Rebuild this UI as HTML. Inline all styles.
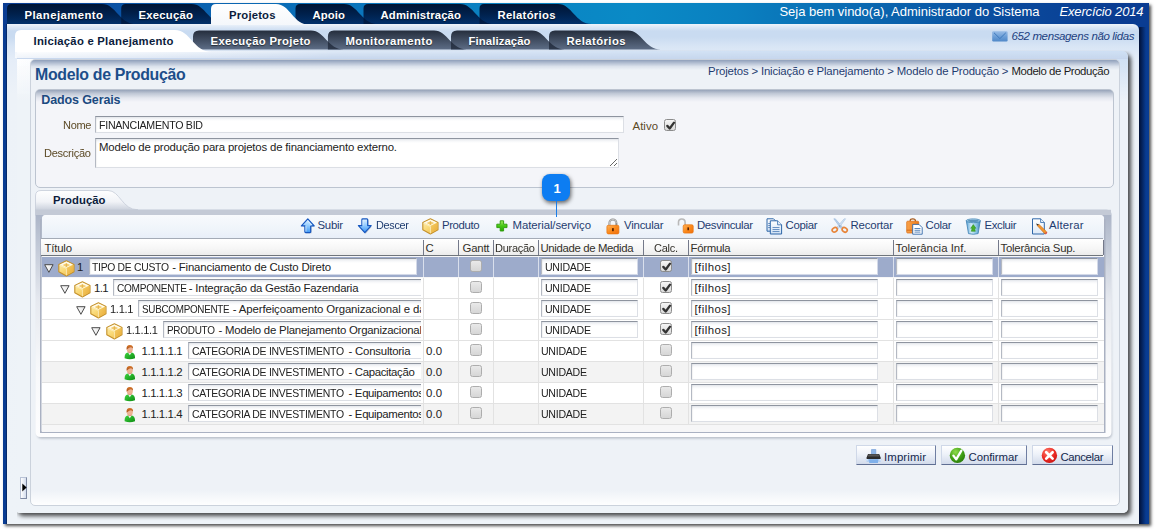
<!DOCTYPE html><html><head><meta charset="utf-8"><title>Modelo de Produção</title><style>

html,body{margin:0;padding:0;background:#fff;}
body{width:1157px;height:532px;position:relative;overflow:hidden;font-family:"Liberation Sans",sans-serif;font-size:11px;}
.a{position:absolute;box-sizing:content-box;}
.t{position:absolute;white-space:nowrap;font-family:"Liberation Sans",sans-serif;}
.in{background:linear-gradient(#e4e7ec 0px,#f6f7f9 2px,#fff 4px);border:1px solid;border-color:#8e949f #dcdfe5 #dcdfe5 #b4b9c3;box-shadow:inset 1px 0 1px rgba(0,0,0,.05);}
.ck{width:9.500px;height:9.500px;border:1px solid #8c8c8c;border-radius:2.500px;background:linear-gradient(#f6f6f6,#d9d9d9);}
.ck.dis{border-color:#adadad;background:linear-gradient(#e9e9e9,#d6d6d6);}
.btn{border:1px solid #8a97b3;border-top-color:#cfd8e8;border-left-color:#cfd8e8;border-bottom-color:#5f6e92;border-right-color:#6f7ea2;background:linear-gradient(#ffffff,#eef2f9 45%,#d2dbeb);}

</style></head><body>
<div class="a" style="left:3px;top:3px;width:1146px;height:521px;background:#093c92;box-shadow:2px 2px 3px rgba(0,0,0,.7);"></div>
<div class="a" style="left:3px;top:3px;width:1146px;height:21px;background:linear-gradient(90deg,#0a3c92 0%,#0a489c 6%,#0a5cab 14%,#0a72ba 28%,#0a84c3 45%,#0a8ac6 55%,#0a80c0 64%,#0a66af 76%,#0a4a9c 88%,#0a3c92 97%);"></div>
<svg class="a" style="left:0;top:0" width="1157" height="30" viewBox="0 0 1157 30"><defs><linearGradient id="tg" x1="0" y1="0" x2="0" y2="1"><stop offset="0" stop-color="#001433"/><stop offset="0.55" stop-color="#00224f"/><stop offset="1" stop-color="#01306a"/></linearGradient><linearGradient id="tg2" x1="0" y1="0" x2="0" y2="1"><stop offset="0" stop-color="#00102b"/><stop offset="1" stop-color="#001c46"/></linearGradient><linearGradient id="ta" x1="0" y1="0" x2="0" y2="1"><stop offset="0" stop-color="#ffffff"/><stop offset="1" stop-color="#f4f7fb"/></linearGradient><clipPath id="tc0"><path d="M7,24 L7,8.5 Q7,4 11.5,4 L102,4 C116.28,4 119.0,24 136,24 Z"/></clipPath><clipPath id="tc1"><path d="M121.2,24 L121.2,8.5 Q121.2,4 125.7,4 L191.5,4 C205.78,4 208.5,24 225.5,24 Z"/></clipPath><clipPath id="tc2"><path d="M211,24 L211,8.5 Q211,4 215.5,4 L276,4 C290.28,4 293.0,24 310,24 Z"/></clipPath><clipPath id="tc3"><path d="M295.5,24 L295.5,8.5 Q295.5,4 300.0,4 L344,4 C358.28,4 361.0,24 378,24 Z"/></clipPath><clipPath id="tc4"><path d="M363.5,24 L363.5,8.5 Q363.5,4 368.0,4 L460,4 C474.28,4 477.0,24 494,24 Z"/></clipPath><clipPath id="tc5"><path d="M479.5,24 L479.5,8.5 Q479.5,4 484.0,4 L558,4 C572.28,4 575.0,24 592,24 Z"/></clipPath></defs><path d="M479.5,24 L479.5,8.5 Q479.5,4 484.0,4 L558,4 C572.28,4 575.0,24 592,24 Z" fill="url(#tg)"/><path d="M363.5,24 L363.5,8.5 Q363.5,4 368.0,4 L460,4 C474.28,4 477.0,24 494,24 Z" fill="url(#tg)"/><path d="M295.5,24 L295.5,8.5 Q295.5,4 300.0,4 L344,4 C358.28,4 361.0,24 378,24 Z" fill="url(#tg)"/><path d="M121.2,24 L121.2,8.5 Q121.2,4 125.7,4 L191.5,4 C205.78,4 208.5,24 225.5,24 Z" fill="url(#tg)"/><path d="M7,24 L7,8.5 Q7,4 11.5,4 L102,4 C116.28,4 119.0,24 136,24 Z" fill="url(#tg)"/><path d="M7,24 L7,8.5 Q7,4 11.5,4 L102,4 C116.28,4 119.0,24 136,24 Z" fill="url(#tg2)" clip-path="url(#tc1)"/><path d="M295.5,24 L295.5,8.5 Q295.5,4 300.0,4 L344,4 C358.28,4 361.0,24 378,24 Z" fill="url(#tg2)" clip-path="url(#tc4)"/><path d="M363.5,24 L363.5,8.5 Q363.5,4 368.0,4 L460,4 C474.28,4 477.0,24 494,24 Z" fill="url(#tg2)" clip-path="url(#tc5)"/></svg>
<div class="a" style="left:7px;top:24px;width:1132px;height:500px;border-radius:0 6px 0 0;background:linear-gradient(#eef4fb 0px,#dde8f6 3px,#c9dbf1 7px,#c9dbf1 13px,#d8e5f5 22px,#e5edf8 36px,#edf2f8 70px,#eef3f8 100%);"></div>
<div class="a" style="left:1139px;top:27px;width:7px;height:497px;background:linear-gradient(90deg,rgba(0,8,36,.85),rgba(0,10,40,0));"></div>
<div class="a" style="left:6px;top:24px;width:1px;height:500px;background:#062a6a;"></div>
<svg class="a" style="left:0;top:0" width="1157" height="30" viewBox="0 0 1157 30"><path d="M211,25 L211,9 Q211,4 216,4 L276,4 C290.28,4 293.0,25 310,25 Z" fill="url(#ta)"/></svg>
<div class="a" style="left:15px;top:50.5px;width:1113px;height:462.5px;border-radius:0 6px 5px 5px;background:linear-gradient(rgba(200,216,238,0) 0px,rgba(200,216,238,.35) 2.500px,rgba(198,214,237,.95) 7.500px,rgba(198,214,237,0) 7.600px),linear-gradient(rgba(238,243,248,0) 0px,rgba(238,243,248,0) 8px,#eef3f8 50px),linear-gradient(90deg,#ffffff 0px,#f6f9fd 40px,#dde8f6 330px,#cfe0f4 800px);box-shadow:3px 3px 4px rgba(0,0,0,.7);clip-path:inset(0 -12px -12px 2px);"></div>
<div class="a" style="left:15px;top:50.5px;width:320px;height:7.6px;background:linear-gradient(90deg,rgba(255,255,255,.7),rgba(255,255,255,0));"></div>
<svg class="a" style="left:0;top:24px" width="1157" height="30" viewBox="0 24 1157 30"><defs><linearGradient id="sg" x1="0" y1="0" x2="0" y2="1"><stop offset="0" stop-color="#252e3d"/><stop offset="1" stop-color="#5d6d86"/></linearGradient><linearGradient id="sg2" x1="0" y1="0" x2="0" y2="1"><stop offset="0" stop-color="#1c2432"/><stop offset="1" stop-color="#2d384b"/></linearGradient><clipPath id="sc0"><path d="M193,49.5 L193,36.5 Q193,30.5 199,30.5 L311,30.5 C324.86,30.5 327.5,49.5 344,49.5 Z"/></clipPath><clipPath id="sc1"><path d="M327.9,49.5 L327.9,36.5 Q327.9,30.5 333.9,30.5 L434,30.5 C447.86,30.5 450.5,49.5 467,49.5 Z"/></clipPath><clipPath id="sc2"><path d="M451,49.5 L451,36.5 Q451,30.5 457,30.5 L532,30.5 C545.86,30.5 548.5,49.5 565,49.5 Z"/></clipPath><clipPath id="sc3"><path d="M549,49.5 L549,36.5 Q549,30.5 555,30.5 L628,30.5 C641.86,30.5 644.5,49.5 661,49.5 Z"/></clipPath></defs><path d="M549,49.5 L549,36.5 Q549,30.5 555,30.5 L628,30.5 C641.86,30.5 644.5,49.5 661,49.5 Z" fill="url(#sg)"/><path d="M451,49.5 L451,36.5 Q451,30.5 457,30.5 L532,30.5 C545.86,30.5 548.5,49.5 565,49.5 Z" fill="url(#sg)"/><path d="M327.9,49.5 L327.9,36.5 Q327.9,30.5 333.9,30.5 L434,30.5 C447.86,30.5 450.5,49.5 467,49.5 Z" fill="url(#sg)"/><path d="M193,49.5 L193,36.5 Q193,30.5 199,30.5 L311,30.5 C324.86,30.5 327.5,49.5 344,49.5 Z" fill="url(#sg)"/><path d="M193,49.5 L193,36.5 Q193,30.5 199,30.5 L311,30.5 C324.86,30.5 327.5,49.5 344,49.5 Z" fill="url(#sg2)" clip-path="url(#sc1)"/><path d="M327.9,49.5 L327.9,36.5 Q327.9,30.5 333.9,30.5 L434,30.5 C447.86,30.5 450.5,49.5 467,49.5 Z" fill="url(#sg2)" clip-path="url(#sc2)"/><path d="M451,49.5 L451,36.5 Q451,30.5 457,30.5 L532,30.5 C545.86,30.5 548.5,49.5 565,49.5 Z" fill="url(#sg2)" clip-path="url(#sc3)"/><path d="M15,52 L15,36 Q15,30 21,30 L175,30 C190.54,30 193.5,52 212,52 Z" fill="#fff"/></svg>
<svg class="a" style="left:992px;top:31px" width="16" height="11" viewBox="0 0 16 11"><defs><linearGradient id="g1" x1="0" y1="0" x2="0" y2="1"><stop offset="0" stop-color="#98bce6"/><stop offset="0.55" stop-color="#6a9dd6"/><stop offset="1" stop-color="#5088c8"/></linearGradient></defs><rect x="0.200" y="0.200" width="15.400" height="10.300" rx="1.200" fill="url(#g1)"/><path d="M2,1.800 L7.900,7.600 L13.800,1.800" fill="none" stroke="#3f79bd" stroke-width="1"/></svg>
<div class="a" style="left:30px;top:58.5px;width:1087.5px;height:445.5px;border:1px solid #cbd2dc;border-radius:5px;background:linear-gradient(#8f9fba 0px,#b3bfd2 3px,#dbe2ec 6.500px,#eef2f7 10px,#eef2f7 430px,#ffffff 446px);"></div>
<div class="a" style="left:35px;top:88.5px;width:1076.5px;height:97px;border:1px solid #bcc4d0;border-radius:5px;background:linear-gradient(#97a3b9 0px,#c0c8d6 3.500px,#e4e7ef 8px,#f4f5f9 12px,#f4f5f9 100%);"></div>
<div class="a in" style="left:95px;top:116px;width:527px;height:15px;"></div>
<div class="a in" style="left:95px;top:138px;width:522px;height:28px;"></div>
<svg class="a" style="left:608px;top:157px" width="10" height="10" viewBox="0 0 10 10"><path d="M9,2 L2,9 M9,6 L6,9" stroke="#666" stroke-width="1"/></svg>
<div class="a ck" style="left:664.2px;top:119.1px"></div><svg class="a" style="left:664.7px;top:119.6px" width="11" height="11" viewBox="0 0 11 11"><path d="M2.300,5.900 L4.700,8.500 L9,2.600" fill="none" stroke="#333" stroke-width="2.300" stroke-linecap="round" stroke-linejoin="round"/></svg>
<svg class="a" style="left:30px;top:186px" width="1090" height="256" viewBox="30 186 1090 256"><defs><linearGradient id="pt" x1="0" y1="190" x2="0" y2="216" gradientUnits="userSpaceOnUse"><stop offset="0" stop-color="#ffffff"/><stop offset=".45" stop-color="#f1f3f7"/><stop offset="1" stop-color="#aeb7c8"/></linearGradient><linearGradient id="pl" x1="0" y1="210" x2="0" y2="437" gradientUnits="userSpaceOnUse"><stop offset="0" stop-color="#a9b2c5"/><stop offset=".12" stop-color="#bcc4d3"/><stop offset=".4" stop-color="#e6e9ef"/><stop offset=".7" stop-color="#f7f8fa"/><stop offset="1" stop-color="#fdfdfe"/></linearGradient><filter id="psh" x="-2%" y="-5%" width="104%" height="112%"><feGaussianBlur stdDeviation="1.200"/></filter></defs><linearGradient id="psg" x1="0" y1="230" x2="0" y2="438" gradientUnits="userSpaceOnUse"><stop offset="0" stop-color="#5a6478" stop-opacity="0"/><stop offset=".7" stop-color="#5a6478" stop-opacity=".7"/><stop offset="1" stop-color="#5a6478" stop-opacity="1"/></linearGradient><path d="M37,230 H1112 V433 Q1112,438.500 1107,438.500 H42 Q37,438.500 37,433 Z" fill="url(#psg)" opacity=".38" filter="url(#psh)"/><path d="M35.500,209.800 H1106.500 Q1111.500,209.800 1111.500,215 V432 Q1111.500,437 1106.500,437 H40.500 Q35.500,437 35.500,432 Z" fill="url(#pl)"/><path d="M35.500,216 V196 Q35.500,190.500 41,190.500 H108 C120,190.500 122,209.800 138,209.800 H35.500 Z" fill="url(#pt)" stroke="#c5ccd8" stroke-width=".8"/><rect x="36" y="209.800" width="1075" height="5.200" fill="#c4cad6"/><path d="M40.750,219 V432.250 H1104.750 V219" fill="none" stroke="#aab1c2" stroke-width="1.500"/></svg>
<div class="a" style="left:41.5px;top:215px;width:1062.5px;height:216.5px;border-radius:4px 4px 0 0;background:#f6f6f7;"></div>
<div class="a" style="left:41.5px;top:215px;width:1062.5px;height:23.5px;border-radius:4px 4px 0 0;background:linear-gradient(#f8fafd,#eff4fa 60%,#e7eef8);"></div>
<div class="a" style="left:41px;top:238px;width:1062px;height:16px;background:linear-gradient(#ffffff,#f6f6f6 60%,#ececec);border-top:1px solid #a4abb6;border-bottom:1px solid #6f757c;"></div>
<div class="a" style="left:423.0px;top:240px;width:1px;height:15px;background:#74798a;"></div>
<div class="a" style="left:458.0px;top:240px;width:1px;height:15px;background:#74798a;"></div>
<div class="a" style="left:493.0px;top:240px;width:1px;height:15px;background:#74798a;"></div>
<div class="a" style="left:538.0px;top:240px;width:1px;height:15px;background:#74798a;"></div>
<div class="a" style="left:643.0px;top:240px;width:1px;height:15px;background:#74798a;"></div>
<div class="a" style="left:688.0px;top:240px;width:1px;height:15px;background:#74798a;"></div>
<div class="a" style="left:893.0px;top:240px;width:1px;height:15px;background:#74798a;"></div>
<div class="a" style="left:998.0px;top:240px;width:1px;height:15px;background:#74798a;"></div>
<div class="a" style="left:1103.0px;top:240px;width:1px;height:15px;background:#74798a;"></div>
<div class="a" style="left:41.5px;top:257px;width:1062px;height:20px;background:#9dabcb;"></div>
<div class="a" style="left:423.0px;top:257px;width:1px;height:20px;background:#d9dfec;"></div>
<div class="a" style="left:458.0px;top:257px;width:1px;height:20px;background:#d9dfec;"></div>
<div class="a" style="left:493.0px;top:257px;width:1px;height:20px;background:#d9dfec;"></div>
<div class="a" style="left:538.0px;top:257px;width:1px;height:20px;background:#d9dfec;"></div>
<div class="a" style="left:643.0px;top:257px;width:1px;height:20px;background:#d9dfec;"></div>
<div class="a" style="left:688.0px;top:257px;width:1px;height:20px;background:#d9dfec;"></div>
<div class="a" style="left:893.0px;top:257px;width:1px;height:20px;background:#d9dfec;"></div>
<div class="a" style="left:998.0px;top:257px;width:1px;height:20px;background:#d9dfec;"></div>
<svg class="a" style="left:44px;top:264px" width="10" height="9" viewBox="0 0 10 9"><defs><linearGradient id="g2" x1="0" y1="0" x2="1" y2="0"><stop offset="0" stop-color="#ffffff"/><stop offset="1" stop-color="#e4e4e4"/></linearGradient></defs><path d="M0.700,0.700 H9.100 L4.900,8.300 Z" fill="url(#g2)" stroke="#4a4a4a" stroke-width="1" stroke-linejoin="round"/></svg>
<svg class="a" style="left:57.6px;top:259.6px" width="17" height="17" viewBox="0 0 17 17"><defs><linearGradient id="g3" x1="0" y1="0" x2="0.6" y2="1"><stop offset="0" stop-color="#fef2bc"/><stop offset="0.6" stop-color="#f9d977"/><stop offset="1" stop-color="#f3c355"/></linearGradient><linearGradient id="g4" x1="0" y1="0" x2="1" y2="1"><stop offset="0" stop-color="#f6cf68"/><stop offset="1" stop-color="#e8ab38"/></linearGradient></defs><path d="M8.400,0.700 L16,4.400 L16,11.700 L8.400,15.900 L0.800,11.700 L0.800,4.400 Z" fill="url(#g3)" stroke="#c4912c" stroke-width="1.100" stroke-linejoin="round"/><path d="M8.400,8 L15.500,4.700 L15.500,11.400 L8.400,15.300 Z" fill="url(#g4)"/><path d="M8.400,1.400 L15,4.500 L8.400,7.700 L1.800,4.500 Z" fill="#fffaea"/><path d="M8.400,3.300 L12.200,5 L8.400,6.900 L4.600,5 Z" fill="#f3cb6c"/><path d="M8.400,3.300 L8.400,6.900" stroke="#dba944" stroke-width=".7"/><path d="M1.600,5.300 L8.400,8.500 L8.400,15.300" fill="none" stroke="#fdf0c4" stroke-width=".8"/></svg>
<div class="a in" style="left:88.5px;top:258px;width:326.5px;height:15px;border-color:#8e949f #d3d9e8 #d3d9e8 #b4b9c3;"></div>
<div class="a ck dis" style="left:470.3px;top:260.3px"></div>
<div class="a in" style="left:540.7px;top:258px;width:95px;height:15px;border-color:#8e949f #d3d9e8 #d3d9e8 #b4b9c3;"></div>
<div class="a in" style="left:690.7px;top:258px;width:185.3px;height:15px;border-color:#8e949f #d3d9e8 #d3d9e8 #b4b9c3;"></div>
<div class="a ck" style="left:660.2px;top:260.2px"></div><svg class="a" style="left:660.7px;top:260.7px" width="11" height="11" viewBox="0 0 11 11"><path d="M2.300,5.900 L4.700,8.500 L9,2.600" fill="none" stroke="#333" stroke-width="2.300" stroke-linecap="round" stroke-linejoin="round"/></svg>
<div class="a in" style="left:896px;top:258px;width:95px;height:15px;border-color:#8e949f #d3d9e8 #d3d9e8 #b4b9c3;"></div>
<div class="a in" style="left:1001px;top:258px;width:95px;height:15px;border-color:#8e949f #d3d9e8 #d3d9e8 #b4b9c3;"></div>
<div class="a" style="left:41.5px;top:278px;width:1062px;height:20px;background:#fff;"></div>
<div class="a" style="left:41.5px;top:298px;width:1062px;height:1px;background:#e2e2e2;"></div>
<div class="a" style="left:423.0px;top:278px;width:1px;height:21px;background:#e2e2e2;"></div>
<div class="a" style="left:458.0px;top:278px;width:1px;height:21px;background:#e2e2e2;"></div>
<div class="a" style="left:493.0px;top:278px;width:1px;height:21px;background:#e2e2e2;"></div>
<div class="a" style="left:538.0px;top:278px;width:1px;height:21px;background:#e2e2e2;"></div>
<div class="a" style="left:643.0px;top:278px;width:1px;height:21px;background:#e2e2e2;"></div>
<div class="a" style="left:688.0px;top:278px;width:1px;height:21px;background:#e2e2e2;"></div>
<div class="a" style="left:893.0px;top:278px;width:1px;height:21px;background:#e2e2e2;"></div>
<div class="a" style="left:998.0px;top:278px;width:1px;height:21px;background:#e2e2e2;"></div>
<svg class="a" style="left:60px;top:285px" width="10" height="9" viewBox="0 0 10 9"><defs><linearGradient id="g5" x1="0" y1="0" x2="1" y2="0"><stop offset="0" stop-color="#ffffff"/><stop offset="1" stop-color="#e4e4e4"/></linearGradient></defs><path d="M0.700,0.700 H9.100 L4.900,8.300 Z" fill="url(#g5)" stroke="#4a4a4a" stroke-width="1" stroke-linejoin="round"/></svg>
<svg class="a" style="left:73.6px;top:280.6px" width="17" height="17" viewBox="0 0 17 17"><defs><linearGradient id="g6" x1="0" y1="0" x2="0.6" y2="1"><stop offset="0" stop-color="#fef2bc"/><stop offset="0.6" stop-color="#f9d977"/><stop offset="1" stop-color="#f3c355"/></linearGradient><linearGradient id="g7" x1="0" y1="0" x2="1" y2="1"><stop offset="0" stop-color="#f6cf68"/><stop offset="1" stop-color="#e8ab38"/></linearGradient></defs><path d="M8.400,0.700 L16,4.400 L16,11.700 L8.400,15.900 L0.800,11.700 L0.800,4.400 Z" fill="url(#g6)" stroke="#c4912c" stroke-width="1.100" stroke-linejoin="round"/><path d="M8.400,8 L15.500,4.700 L15.500,11.400 L8.400,15.300 Z" fill="url(#g7)"/><path d="M8.400,1.400 L15,4.500 L8.400,7.700 L1.800,4.500 Z" fill="#fffaea"/><path d="M8.400,3.300 L12.200,5 L8.400,6.900 L4.600,5 Z" fill="#f3cb6c"/><path d="M8.400,3.300 L8.400,6.900" stroke="#dba944" stroke-width=".7"/><path d="M1.600,5.300 L8.400,8.500 L8.400,15.300" fill="none" stroke="#fdf0c4" stroke-width=".8"/></svg>
<div class="a in" style="left:113px;top:279px;width:307px;height:15px;border-right:none;"></div>
<div class="a ck dis" style="left:470.3px;top:281.3px"></div>
<div class="a in" style="left:540.7px;top:279px;width:95px;height:15px;"></div>
<div class="a in" style="left:690.7px;top:279px;width:185.3px;height:15px;"></div>
<div class="a ck" style="left:660.2px;top:281.2px"></div><svg class="a" style="left:660.7px;top:281.7px" width="11" height="11" viewBox="0 0 11 11"><path d="M2.300,5.900 L4.700,8.500 L9,2.600" fill="none" stroke="#333" stroke-width="2.300" stroke-linecap="round" stroke-linejoin="round"/></svg>
<div class="a in" style="left:896px;top:279px;width:95px;height:15px;"></div>
<div class="a in" style="left:1001px;top:279px;width:95px;height:15px;"></div>
<div class="a" style="left:41.5px;top:299px;width:1062px;height:20px;background:#fff;"></div>
<div class="a" style="left:41.5px;top:319px;width:1062px;height:1px;background:#e2e2e2;"></div>
<div class="a" style="left:423.0px;top:299px;width:1px;height:21px;background:#e2e2e2;"></div>
<div class="a" style="left:458.0px;top:299px;width:1px;height:21px;background:#e2e2e2;"></div>
<div class="a" style="left:493.0px;top:299px;width:1px;height:21px;background:#e2e2e2;"></div>
<div class="a" style="left:538.0px;top:299px;width:1px;height:21px;background:#e2e2e2;"></div>
<div class="a" style="left:643.0px;top:299px;width:1px;height:21px;background:#e2e2e2;"></div>
<div class="a" style="left:688.0px;top:299px;width:1px;height:21px;background:#e2e2e2;"></div>
<div class="a" style="left:893.0px;top:299px;width:1px;height:21px;background:#e2e2e2;"></div>
<div class="a" style="left:998.0px;top:299px;width:1px;height:21px;background:#e2e2e2;"></div>
<svg class="a" style="left:75.5px;top:306px" width="10" height="9" viewBox="0 0 10 9"><defs><linearGradient id="g8" x1="0" y1="0" x2="1" y2="0"><stop offset="0" stop-color="#ffffff"/><stop offset="1" stop-color="#e4e4e4"/></linearGradient></defs><path d="M0.700,0.700 H9.100 L4.900,8.300 Z" fill="url(#g8)" stroke="#4a4a4a" stroke-width="1" stroke-linejoin="round"/></svg>
<svg class="a" style="left:89.6px;top:301.6px" width="17" height="17" viewBox="0 0 17 17"><defs><linearGradient id="g9" x1="0" y1="0" x2="0.6" y2="1"><stop offset="0" stop-color="#fef2bc"/><stop offset="0.6" stop-color="#f9d977"/><stop offset="1" stop-color="#f3c355"/></linearGradient><linearGradient id="g10" x1="0" y1="0" x2="1" y2="1"><stop offset="0" stop-color="#f6cf68"/><stop offset="1" stop-color="#e8ab38"/></linearGradient></defs><path d="M8.400,0.700 L16,4.400 L16,11.700 L8.400,15.900 L0.800,11.700 L0.800,4.400 Z" fill="url(#g9)" stroke="#c4912c" stroke-width="1.100" stroke-linejoin="round"/><path d="M8.400,8 L15.500,4.700 L15.500,11.400 L8.400,15.300 Z" fill="url(#g10)"/><path d="M8.400,1.400 L15,4.500 L8.400,7.700 L1.800,4.500 Z" fill="#fffaea"/><path d="M8.400,3.300 L12.200,5 L8.400,6.900 L4.600,5 Z" fill="#f3cb6c"/><path d="M8.400,3.300 L8.400,6.900" stroke="#dba944" stroke-width=".7"/><path d="M1.600,5.300 L8.400,8.500 L8.400,15.300" fill="none" stroke="#fdf0c4" stroke-width=".8"/></svg>
<div class="a in" style="left:138px;top:300px;width:282px;height:15px;border-right:none;"></div>
<div class="a ck dis" style="left:470.3px;top:302.3px"></div>
<div class="a in" style="left:540.7px;top:300px;width:95px;height:15px;"></div>
<div class="a in" style="left:690.7px;top:300px;width:185.3px;height:15px;"></div>
<div class="a ck" style="left:660.2px;top:302.2px"></div><svg class="a" style="left:660.7px;top:302.7px" width="11" height="11" viewBox="0 0 11 11"><path d="M2.300,5.900 L4.700,8.500 L9,2.600" fill="none" stroke="#333" stroke-width="2.300" stroke-linecap="round" stroke-linejoin="round"/></svg>
<div class="a in" style="left:896px;top:300px;width:95px;height:15px;"></div>
<div class="a in" style="left:1001px;top:300px;width:95px;height:15px;"></div>
<div class="a" style="left:41.5px;top:320px;width:1062px;height:20px;background:#fff;"></div>
<div class="a" style="left:41.5px;top:340px;width:1062px;height:1px;background:#e2e2e2;"></div>
<div class="a" style="left:423.0px;top:320px;width:1px;height:21px;background:#e2e2e2;"></div>
<div class="a" style="left:458.0px;top:320px;width:1px;height:21px;background:#e2e2e2;"></div>
<div class="a" style="left:493.0px;top:320px;width:1px;height:21px;background:#e2e2e2;"></div>
<div class="a" style="left:538.0px;top:320px;width:1px;height:21px;background:#e2e2e2;"></div>
<div class="a" style="left:643.0px;top:320px;width:1px;height:21px;background:#e2e2e2;"></div>
<div class="a" style="left:688.0px;top:320px;width:1px;height:21px;background:#e2e2e2;"></div>
<div class="a" style="left:893.0px;top:320px;width:1px;height:21px;background:#e2e2e2;"></div>
<div class="a" style="left:998.0px;top:320px;width:1px;height:21px;background:#e2e2e2;"></div>
<svg class="a" style="left:91px;top:327px" width="10" height="9" viewBox="0 0 10 9"><defs><linearGradient id="g11" x1="0" y1="0" x2="1" y2="0"><stop offset="0" stop-color="#ffffff"/><stop offset="1" stop-color="#e4e4e4"/></linearGradient></defs><path d="M0.700,0.700 H9.100 L4.900,8.300 Z" fill="url(#g11)" stroke="#4a4a4a" stroke-width="1" stroke-linejoin="round"/></svg>
<svg class="a" style="left:105.6px;top:322.6px" width="17" height="17" viewBox="0 0 17 17"><defs><linearGradient id="g12" x1="0" y1="0" x2="0.6" y2="1"><stop offset="0" stop-color="#fef2bc"/><stop offset="0.6" stop-color="#f9d977"/><stop offset="1" stop-color="#f3c355"/></linearGradient><linearGradient id="g13" x1="0" y1="0" x2="1" y2="1"><stop offset="0" stop-color="#f6cf68"/><stop offset="1" stop-color="#e8ab38"/></linearGradient></defs><path d="M8.400,0.700 L16,4.400 L16,11.700 L8.400,15.900 L0.800,11.700 L0.800,4.400 Z" fill="url(#g12)" stroke="#c4912c" stroke-width="1.100" stroke-linejoin="round"/><path d="M8.400,8 L15.500,4.700 L15.500,11.400 L8.400,15.300 Z" fill="url(#g13)"/><path d="M8.400,1.400 L15,4.500 L8.400,7.700 L1.800,4.500 Z" fill="#fffaea"/><path d="M8.400,3.300 L12.200,5 L8.400,6.900 L4.600,5 Z" fill="#f3cb6c"/><path d="M8.400,3.300 L8.400,6.900" stroke="#dba944" stroke-width=".7"/><path d="M1.600,5.300 L8.400,8.500 L8.400,15.300" fill="none" stroke="#fdf0c4" stroke-width=".8"/></svg>
<div class="a in" style="left:162.5px;top:321px;width:257.5px;height:15px;border-right:none;"></div>
<div class="a ck dis" style="left:470.3px;top:323.3px"></div>
<div class="a in" style="left:540.7px;top:321px;width:95px;height:15px;"></div>
<div class="a in" style="left:690.7px;top:321px;width:185.3px;height:15px;"></div>
<div class="a ck" style="left:660.2px;top:323.2px"></div><svg class="a" style="left:660.7px;top:323.7px" width="11" height="11" viewBox="0 0 11 11"><path d="M2.300,5.900 L4.700,8.500 L9,2.600" fill="none" stroke="#333" stroke-width="2.300" stroke-linecap="round" stroke-linejoin="round"/></svg>
<div class="a in" style="left:896px;top:321px;width:95px;height:15px;"></div>
<div class="a in" style="left:1001px;top:321px;width:95px;height:15px;"></div>
<div class="a" style="left:41.5px;top:341px;width:1062px;height:20px;background:#fff;"></div>
<div class="a" style="left:41.5px;top:361px;width:1062px;height:1px;background:#e2e2e2;"></div>
<div class="a" style="left:423.0px;top:341px;width:1px;height:21px;background:#e2e2e2;"></div>
<div class="a" style="left:458.0px;top:341px;width:1px;height:21px;background:#e2e2e2;"></div>
<div class="a" style="left:493.0px;top:341px;width:1px;height:21px;background:#e2e2e2;"></div>
<div class="a" style="left:538.0px;top:341px;width:1px;height:21px;background:#e2e2e2;"></div>
<div class="a" style="left:643.0px;top:341px;width:1px;height:21px;background:#e2e2e2;"></div>
<div class="a" style="left:688.0px;top:341px;width:1px;height:21px;background:#e2e2e2;"></div>
<div class="a" style="left:893.0px;top:341px;width:1px;height:21px;background:#e2e2e2;"></div>
<div class="a" style="left:998.0px;top:341px;width:1px;height:21px;background:#e2e2e2;"></div>
<svg class="a" style="left:123.6px;top:343.6px" width="11.8" height="16.4" viewBox="0 0 13 17"><defs><linearGradient id="g14" x1="0" y1="0" x2="1" y2="1"><stop offset="0" stop-color="#3fd43f"/><stop offset="1" stop-color="#0c8c12"/></linearGradient><linearGradient id="g15" x1="0" y1="0" x2="0" y2="1"><stop offset="0" stop-color="#d8792c"/><stop offset="1" stop-color="#a8501a"/></linearGradient></defs><path d="M0.700,15.300 Q0.300,9.600 4.200,8.800 L8.600,8.800 Q12.500,9.600 12.100,15.300 Q6.400,17.400 0.700,15.300 Z" fill="url(#g14)"/><path d="M4.400,8.800 L6.400,12 L8.400,8.800 Z" fill="#f2f2f2"/><ellipse cx="6.400" cy="5.300" rx="3.300" ry="4" fill="#eeb394"/><path d="M2.900,5.600 Q2.100,0.600 6.400,0.500 Q10.500,0.600 9.900,4.600 Q9.400,3.300 7.600,3.100 Q5.400,3.400 4.200,4.600 Q3.400,5 2.900,5.600 Z" fill="url(#g15)"/><path d="M4.200,8.200 Q6.400,9.800 8.600,8.200" fill="none" stroke="#c98a68" stroke-width=".6"/></svg>
<div class="a in" style="left:187.5px;top:342px;width:232.5px;height:15px;border-right:none;"></div>
<div class="a ck dis" style="left:470.3px;top:344.3px"></div>
<div class="a in" style="left:690.7px;top:342px;width:185.3px;height:15px;"></div>
<div class="a ck dis" style="left:660.2px;top:344.2px"></div>
<div class="a in" style="left:896px;top:342px;width:95px;height:15px;"></div>
<div class="a in" style="left:1001px;top:342px;width:95px;height:15px;"></div>
<div class="a" style="left:41.5px;top:362px;width:1062px;height:20px;background:#f3f3f3;"></div>
<div class="a" style="left:41.5px;top:382px;width:1062px;height:1px;background:#e2e2e2;"></div>
<div class="a" style="left:423.0px;top:362px;width:1px;height:21px;background:#e2e2e2;"></div>
<div class="a" style="left:458.0px;top:362px;width:1px;height:21px;background:#e2e2e2;"></div>
<div class="a" style="left:493.0px;top:362px;width:1px;height:21px;background:#e2e2e2;"></div>
<div class="a" style="left:538.0px;top:362px;width:1px;height:21px;background:#e2e2e2;"></div>
<div class="a" style="left:643.0px;top:362px;width:1px;height:21px;background:#e2e2e2;"></div>
<div class="a" style="left:688.0px;top:362px;width:1px;height:21px;background:#e2e2e2;"></div>
<div class="a" style="left:893.0px;top:362px;width:1px;height:21px;background:#e2e2e2;"></div>
<div class="a" style="left:998.0px;top:362px;width:1px;height:21px;background:#e2e2e2;"></div>
<svg class="a" style="left:123.6px;top:364.6px" width="11.8" height="16.4" viewBox="0 0 13 17"><defs><linearGradient id="g16" x1="0" y1="0" x2="1" y2="1"><stop offset="0" stop-color="#3fd43f"/><stop offset="1" stop-color="#0c8c12"/></linearGradient><linearGradient id="g17" x1="0" y1="0" x2="0" y2="1"><stop offset="0" stop-color="#d8792c"/><stop offset="1" stop-color="#a8501a"/></linearGradient></defs><path d="M0.700,15.300 Q0.300,9.600 4.200,8.800 L8.600,8.800 Q12.500,9.600 12.100,15.300 Q6.400,17.400 0.700,15.300 Z" fill="url(#g16)"/><path d="M4.400,8.800 L6.400,12 L8.400,8.800 Z" fill="#f2f2f2"/><ellipse cx="6.400" cy="5.300" rx="3.300" ry="4" fill="#eeb394"/><path d="M2.900,5.600 Q2.100,0.600 6.400,0.500 Q10.500,0.600 9.900,4.600 Q9.400,3.300 7.600,3.100 Q5.400,3.400 4.200,4.600 Q3.400,5 2.900,5.600 Z" fill="url(#g17)"/><path d="M4.200,8.200 Q6.400,9.800 8.600,8.200" fill="none" stroke="#c98a68" stroke-width=".6"/></svg>
<div class="a in" style="left:187.5px;top:363px;width:232.5px;height:15px;border-right:none;"></div>
<div class="a ck dis" style="left:470.3px;top:365.3px"></div>
<div class="a in" style="left:690.7px;top:363px;width:185.3px;height:15px;"></div>
<div class="a ck dis" style="left:660.2px;top:365.2px"></div>
<div class="a in" style="left:896px;top:363px;width:95px;height:15px;"></div>
<div class="a in" style="left:1001px;top:363px;width:95px;height:15px;"></div>
<div class="a" style="left:41.5px;top:383px;width:1062px;height:20px;background:#fff;"></div>
<div class="a" style="left:41.5px;top:403px;width:1062px;height:1px;background:#e2e2e2;"></div>
<div class="a" style="left:423.0px;top:383px;width:1px;height:21px;background:#e2e2e2;"></div>
<div class="a" style="left:458.0px;top:383px;width:1px;height:21px;background:#e2e2e2;"></div>
<div class="a" style="left:493.0px;top:383px;width:1px;height:21px;background:#e2e2e2;"></div>
<div class="a" style="left:538.0px;top:383px;width:1px;height:21px;background:#e2e2e2;"></div>
<div class="a" style="left:643.0px;top:383px;width:1px;height:21px;background:#e2e2e2;"></div>
<div class="a" style="left:688.0px;top:383px;width:1px;height:21px;background:#e2e2e2;"></div>
<div class="a" style="left:893.0px;top:383px;width:1px;height:21px;background:#e2e2e2;"></div>
<div class="a" style="left:998.0px;top:383px;width:1px;height:21px;background:#e2e2e2;"></div>
<svg class="a" style="left:123.6px;top:385.6px" width="11.8" height="16.4" viewBox="0 0 13 17"><defs><linearGradient id="g18" x1="0" y1="0" x2="1" y2="1"><stop offset="0" stop-color="#3fd43f"/><stop offset="1" stop-color="#0c8c12"/></linearGradient><linearGradient id="g19" x1="0" y1="0" x2="0" y2="1"><stop offset="0" stop-color="#d8792c"/><stop offset="1" stop-color="#a8501a"/></linearGradient></defs><path d="M0.700,15.300 Q0.300,9.600 4.200,8.800 L8.600,8.800 Q12.500,9.600 12.100,15.300 Q6.400,17.400 0.700,15.300 Z" fill="url(#g18)"/><path d="M4.400,8.800 L6.400,12 L8.400,8.800 Z" fill="#f2f2f2"/><ellipse cx="6.400" cy="5.300" rx="3.300" ry="4" fill="#eeb394"/><path d="M2.900,5.600 Q2.100,0.600 6.400,0.500 Q10.500,0.600 9.900,4.600 Q9.400,3.300 7.600,3.100 Q5.400,3.400 4.200,4.600 Q3.400,5 2.900,5.600 Z" fill="url(#g19)"/><path d="M4.200,8.200 Q6.400,9.800 8.600,8.200" fill="none" stroke="#c98a68" stroke-width=".6"/></svg>
<div class="a in" style="left:187.5px;top:384px;width:232.5px;height:15px;border-right:none;"></div>
<div class="a ck dis" style="left:470.3px;top:386.3px"></div>
<div class="a in" style="left:690.7px;top:384px;width:185.3px;height:15px;"></div>
<div class="a ck dis" style="left:660.2px;top:386.2px"></div>
<div class="a in" style="left:896px;top:384px;width:95px;height:15px;"></div>
<div class="a in" style="left:1001px;top:384px;width:95px;height:15px;"></div>
<div class="a" style="left:41.5px;top:404px;width:1062px;height:20px;background:#f3f3f3;"></div>
<div class="a" style="left:41.5px;top:424px;width:1062px;height:1px;background:#e2e2e2;"></div>
<div class="a" style="left:423.0px;top:404px;width:1px;height:21px;background:#e2e2e2;"></div>
<div class="a" style="left:458.0px;top:404px;width:1px;height:21px;background:#e2e2e2;"></div>
<div class="a" style="left:493.0px;top:404px;width:1px;height:21px;background:#e2e2e2;"></div>
<div class="a" style="left:538.0px;top:404px;width:1px;height:21px;background:#e2e2e2;"></div>
<div class="a" style="left:643.0px;top:404px;width:1px;height:21px;background:#e2e2e2;"></div>
<div class="a" style="left:688.0px;top:404px;width:1px;height:21px;background:#e2e2e2;"></div>
<div class="a" style="left:893.0px;top:404px;width:1px;height:21px;background:#e2e2e2;"></div>
<div class="a" style="left:998.0px;top:404px;width:1px;height:21px;background:#e2e2e2;"></div>
<svg class="a" style="left:123.6px;top:406.6px" width="11.8" height="16.4" viewBox="0 0 13 17"><defs><linearGradient id="g20" x1="0" y1="0" x2="1" y2="1"><stop offset="0" stop-color="#3fd43f"/><stop offset="1" stop-color="#0c8c12"/></linearGradient><linearGradient id="g21" x1="0" y1="0" x2="0" y2="1"><stop offset="0" stop-color="#d8792c"/><stop offset="1" stop-color="#a8501a"/></linearGradient></defs><path d="M0.700,15.300 Q0.300,9.600 4.200,8.800 L8.600,8.800 Q12.500,9.600 12.100,15.300 Q6.400,17.400 0.700,15.300 Z" fill="url(#g20)"/><path d="M4.400,8.800 L6.400,12 L8.400,8.800 Z" fill="#f2f2f2"/><ellipse cx="6.400" cy="5.300" rx="3.300" ry="4" fill="#eeb394"/><path d="M2.900,5.600 Q2.100,0.600 6.400,0.500 Q10.500,0.600 9.900,4.600 Q9.400,3.300 7.600,3.100 Q5.400,3.400 4.200,4.600 Q3.400,5 2.900,5.600 Z" fill="url(#g21)"/><path d="M4.200,8.200 Q6.400,9.800 8.600,8.200" fill="none" stroke="#c98a68" stroke-width=".6"/></svg>
<div class="a in" style="left:187.5px;top:405px;width:232.5px;height:15px;border-right:none;"></div>
<div class="a ck dis" style="left:470.3px;top:407.3px"></div>
<div class="a in" style="left:690.7px;top:405px;width:185.3px;height:15px;"></div>
<div class="a ck dis" style="left:660.2px;top:407.2px"></div>
<div class="a in" style="left:896px;top:405px;width:95px;height:15px;"></div>
<div class="a in" style="left:1001px;top:405px;width:95px;height:15px;"></div>
<div class="a" style="left:90.5px;top:259px;width:330px;height:16px;overflow:hidden"><span class="t" id="rtA0" style="left:1.50px;top:2px;font-size:11.1px;line-height:12px;color:#222;letter-spacing:-0.300px;transform:scaleX(0.9326);transform-origin:0 0">TIPO DE CUSTO</span><span class="t" id="rtB0" style="left:81.70px;top:2px;font-size:11.4px;line-height:12px;color:#222;letter-spacing:-0.173px">- Financiamento de Custo Direto</span></div>
<div class="a" style="left:115px;top:280px;width:306px;height:16px;overflow:hidden"><span class="t" id="rtA1" style="left:2.00px;top:2px;font-size:11.1px;line-height:12px;color:#222;letter-spacing:-0.300px;transform:scaleX(0.9101);transform-origin:0 0">COMPONENTE</span><span class="t" id="rtB1" style="left:73.80px;top:2px;font-size:11.4px;line-height:12px;color:#222;letter-spacing:-0.218px">- Integração da Gestão Fazendaria</span></div>
<div class="a" style="left:140px;top:301px;width:281px;height:16px;overflow:hidden"><span class="t" id="rtA2" style="left:1.90px;top:2px;font-size:11.1px;line-height:12px;color:#222;letter-spacing:-0.300px;transform:scaleX(0.8882);transform-origin:0 0">SUBCOMPONENTE</span><span class="t" id="rtB2" style="left:92.70px;top:2px;font-size:11.4px;line-height:12px;color:#222;letter-spacing:-0.114px">- Aperfeiçoamento Organizacional e da</span></div>
<div class="a" style="left:164.5px;top:322px;width:256.5px;height:16px;overflow:hidden"><span class="t" id="rtA3" style="left:2.90px;top:2px;font-size:11.1px;line-height:12px;color:#222;letter-spacing:-0.300px;transform:scaleX(0.8975);transform-origin:0 0">PRODUTO</span><span class="t" id="rtB3" style="left:53.90px;top:2px;font-size:11.4px;line-height:12px;color:#222;letter-spacing:-0.224px">- Modelo de Planejamento Organizacional</span></div>
<div class="a" style="left:189.5px;top:343px;width:231.5px;height:16px;overflow:hidden"><span class="t" id="rtA4" style="left:2.40px;top:2px;font-size:11.1px;line-height:12px;color:#222;letter-spacing:-0.300px;transform:scaleX(0.9426);transform-origin:0 0">CATEGORIA DE INVESTIMENTO</span><span class="t" id="rtB4" style="left:159.10px;top:2px;font-size:11.4px;line-height:12px;color:#222;letter-spacing:-0.223px">- Consultoria</span></div>
<div class="a" style="left:189.5px;top:364px;width:231.5px;height:16px;overflow:hidden"><span class="t" id="rtA5" style="left:2.40px;top:2px;font-size:11.1px;line-height:12px;color:#222;letter-spacing:-0.300px;transform:scaleX(0.9426);transform-origin:0 0">CATEGORIA DE INVESTIMENTO</span><span class="t" id="rtB5" style="left:159.10px;top:2px;font-size:11.4px;line-height:12px;color:#222;letter-spacing:-0.340px">- Capacitação</span></div>
<div class="a" style="left:189.5px;top:385px;width:231.5px;height:16px;overflow:hidden"><span class="t" id="rtA6" style="left:2.40px;top:2px;font-size:11.1px;line-height:12px;color:#222;letter-spacing:-0.300px;transform:scaleX(0.9426);transform-origin:0 0">CATEGORIA DE INVESTIMENTO</span><span class="t" id="rtB6" style="left:159.10px;top:2px;font-size:11.4px;line-height:12px;color:#222;letter-spacing:-0.340px">- Equipamentos</span></div>
<div class="a" style="left:189.5px;top:406px;width:231.5px;height:16px;overflow:hidden"><span class="t" id="rtA7" style="left:2.40px;top:2px;font-size:11.1px;line-height:12px;color:#222;letter-spacing:-0.300px;transform:scaleX(0.9426);transform-origin:0 0">CATEGORIA DE INVESTIMENTO</span><span class="t" id="rtB7" style="left:159.10px;top:2px;font-size:11.4px;line-height:12px;color:#222;letter-spacing:-0.340px">- Equipamentos</span></div>
<svg class="a" style="left:299.6px;top:217.6px" width="16" height="17" viewBox="0 0 16 17"><defs><linearGradient id="g22" x1="0" y1="0" x2="0" y2="1"><stop offset="0" stop-color="#e2f2ff"/><stop offset="0.45" stop-color="#9ad0ff"/><stop offset="1" stop-color="#3f98f4"/></linearGradient></defs><path d="M8.6,1.6 L14.6,8.6 L11.6,8.6 L11.6,15.2 L5.6,15.2 L5.600,8.6 L2.6,8.6 Z" fill="#1a2a50" opacity=".28"/><path d="M7.8,0.9 L14.2,7.9 L10.7,7.9 L10.7,13.800 Q10.7,14.6 9.9,14.6 L5.7,14.6 Q4.9,14.6 4.9,13.8 L4.9,7.9 L1.4,7.9 Z" fill="url(#g22)" stroke="#1657c0" stroke-width="1.2" stroke-linejoin="round"/><path d="M7.8,2.8 L11.6,7 L9.8,7 M5.900,8 L5.9,13.6" fill="none" stroke="#e9f5ff" stroke-width=".9" opacity=".8"/></svg>
<svg class="a" style="left:356.8px;top:217.6px" width="16" height="17" viewBox="0 0 16 17"><defs><linearGradient id="g23" x1="0" y1="0" x2="0" y2="1"><stop offset="0" stop-color="#e2f2ff"/><stop offset="0.5" stop-color="#8ec9ff"/><stop offset="1" stop-color="#3590f2"/></linearGradient></defs><path d="M8.6,15.800 L14.6,8.800 L11.6,8.800 L11.6,2.200 L5.6,2.200 L5.6,8.800 L2.6,8.800 Z" fill="#1a2a50" opacity=".28"/><path d="M7.8,14.6 L14.2,7.600 L10.7,7.600 L10.7,1.700 Q10.7,0.9 9.9,0.9 L5.7,0.9 Q4.9,0.9 4.9,1.700 L4.9,7.600 L1.4,7.600 Z" fill="url(#g23)" stroke="#1657c0" stroke-width="1.2" stroke-linejoin="round"/><path d="M5.900,1.900 L5.900,7.5" fill="none" stroke="#e9f5ff" stroke-width=".9" opacity=".8"/></svg>
<svg class="a" style="left:422.3px;top:217.8px" width="17" height="17" viewBox="0 0 17 17"><defs><linearGradient id="g24" x1="0" y1="0" x2="0.6" y2="1"><stop offset="0" stop-color="#fef2bc"/><stop offset="0.6" stop-color="#f9d977"/><stop offset="1" stop-color="#f3c355"/></linearGradient><linearGradient id="g25" x1="0" y1="0" x2="1" y2="1"><stop offset="0" stop-color="#f6cf68"/><stop offset="1" stop-color="#e8ab38"/></linearGradient></defs><path d="M8.400,0.700 L16,4.400 L16,11.700 L8.400,15.900 L0.800,11.700 L0.800,4.400 Z" fill="url(#g24)" stroke="#c4912c" stroke-width="1.100" stroke-linejoin="round"/><path d="M8.400,8 L15.500,4.700 L15.500,11.400 L8.400,15.300 Z" fill="url(#g25)"/><path d="M8.400,1.400 L15,4.500 L8.400,7.700 L1.800,4.500 Z" fill="#fffaea"/><path d="M8.400,3.300 L12.200,5 L8.400,6.900 L4.600,5 Z" fill="#f3cb6c"/><path d="M8.400,3.300 L8.400,6.900" stroke="#dba944" stroke-width=".7"/><path d="M1.600,5.300 L8.400,8.500 L8.400,15.300" fill="none" stroke="#fdf0c4" stroke-width=".8"/></svg>
<svg class="a" style="left:496.2px;top:220.2px" width="12" height="12" viewBox="0 0 12 12"><defs><linearGradient id="g26" x1="0" y1="0" x2="0" y2="1"><stop offset="0" stop-color="#a4ec62"/><stop offset="0.5" stop-color="#46c814"/><stop offset="1" stop-color="#2aa806"/></linearGradient></defs><path d="M4.200,0.800 H7.600 V4.200 H11 V7.600 H7.600 V11 H4.200 V7.600 H0.800 V4.200 H4.200 Z" fill="url(#g26)" stroke="#2a9a08" stroke-width=".9" stroke-linejoin="round"/></svg>
<svg class="a" style="left:605.8px;top:218.2px" width="14" height="17" viewBox="0 0 14 17"><defs><linearGradient id="g27" x1="0" y1="0" x2="1" y2="1"><stop offset="0" stop-color="#ffb35a"/><stop offset="0.5" stop-color="#fb8a1c"/><stop offset="1" stop-color="#f07010"/></linearGradient></defs><path d="M3.400,8 V5.100 A3.500,3.700 0 0 1 10.400,5.100 V8" fill="none" stroke="#8f8f8f" stroke-width="2"/><path d="M3.400,8 V5.100 A3.500,3.700 0 0 1 10.400,5.100" fill="none" stroke="#d8d8d8" stroke-width=".8"/><rect x="0.900" y="7.300" width="12" height="8.600" rx="1.400" fill="url(#g27)" stroke="#e8730c" stroke-width=".7"/><rect x="6" y="10" width="1.800" height="3.200" rx=".4" fill="#5a2400"/></svg>
<svg class="a" style="left:676.5px;top:218px" width="17" height="17" viewBox="0 0 17 17"><defs><linearGradient id="g28" x1="0" y1="0" x2="1" y2="1"><stop offset="0" stop-color="#ffb35a"/><stop offset="0.5" stop-color="#fb8a1c"/><stop offset="1" stop-color="#f07010"/></linearGradient></defs><path d="M1.500,7.500 V4.300 A3.300,3.300 0 0 1 8.100,4.300 V8" fill="none" stroke="#b9b9b9" stroke-width="1.600"/><rect x="6.200" y="6.800" width="10" height="8.300" rx="1.400" fill="url(#g28)" stroke="#e8730c" stroke-width=".7"/><rect x="10.400" y="9.300" width="1.600" height="3" rx=".4" fill="#5a2400"/></svg>
<svg class="a" style="left:765.8px;top:218px" width="17" height="17" viewBox="0 0 17 17"><defs><linearGradient id="g29" x1="0" y1="0" x2="0" y2="1"><stop offset="0" stop-color="#ffffff"/><stop offset="1" stop-color="#cfe0f3"/></linearGradient></defs><path d="M1,0.800 H7.500 L10,3.300 V13.200 H1 Z" fill="url(#g29)" stroke="#2f67a8" stroke-width="1"/><path d="M2.200,5.500 H4 M2.200,7.500 H4 M2.200,9.500 H4" stroke="#5c86ba" stroke-width=".9"/><path d="M4.300,2.800 H11.600 L15.600,6.800 V16 H4.300 Z" fill="url(#g29)" stroke="#2f67a8" stroke-width="1"/><path d="M11.600,2.800 V6.800 H15.600" fill="#e9f1fb" stroke="#2f67a8" stroke-width=".8"/><path d="M6.500,9.500 H13.500 M6.500,11.500 H13.500 M6.500,13.500 H13.500" stroke="#5c88bd" stroke-width=".9"/></svg>
<svg class="a" style="left:830.5px;top:218.4px" width="18" height="16" viewBox="0 0 18 16"><path d="M2.800,0.800 L4.300,0.800 L11.800,9.600 L9.800,10.400 Z" fill="#b9d0ea" stroke="#8fb0d6" stroke-width=".5"/><path d="M14.600,0.800 L13.100,0.800 L5.600,9.600 L7.600,10.400 Z" fill="#d5e3f3" stroke="#9dbbdc" stroke-width=".5"/><ellipse cx="3.700" cy="11.800" rx="2.700" ry="2.100" transform="rotate(-35 3.700 11.800)" fill="none" stroke="#e8853a" stroke-width="1.700"/><ellipse cx="13.700" cy="11.800" rx="2.700" ry="2.100" transform="rotate(35 13.700 11.800)" fill="none" stroke="#e8853a" stroke-width="1.700"/><circle cx="8.700" cy="8" r=".8" fill="#6f8db0"/></svg>
<svg class="a" style="left:906.3px;top:217.8px" width="17" height="17" viewBox="0 0 17 17"><defs><linearGradient id="g30" x1="0" y1="0" x2="1" y2="0"><stop offset="0" stop-color="#f9a24a"/><stop offset="1" stop-color="#ee7a18"/></linearGradient></defs><path d="M4.200,3.600 V2.800 Q4.200,0.800 6.800,0.800 Q9.400,0.800 9.400,2.800 V3.600" fill="none" stroke="#a65a1c" stroke-width="1.300"/><rect x="0.700" y="3.200" width="12" height="11.800" rx="1" fill="url(#g30)" stroke="#d96a10" stroke-width=".7"/><rect x="0.700" y="11.600" width="12" height="1.200" fill="#c65a0c" opacity=".6"/><path d="M6.700,6.400 H13 L16.200,9.600 V16.200 H6.700 Z" fill="#fff" stroke="#2f67a8" stroke-width=".9"/><path d="M8.500,10.500 H14.400 M8.500,12.300 H14.400 M8.500,14.100 H14.400" stroke="#4b7ab4" stroke-width=".9"/></svg>
<svg class="a" style="left:965px;top:217.8px" width="17" height="17" viewBox="0 0 17 17"><defs><linearGradient id="g31" x1="0" y1="0" x2="1" y2="0"><stop offset="0" stop-color="#5fa6d6"/><stop offset="0.35" stop-color="#cfeaf8"/><stop offset="0.7" stop-color="#8cc6e6"/><stop offset="1" stop-color="#3f86bb"/></linearGradient></defs><path d="M1.300,2.800 H15.300 L13.100,15.600 Q8.300,17 3.500,15.600 Z" fill="url(#g31)" stroke="#3b7fb2" stroke-width=".8"/><ellipse cx="8.300" cy="2.800" rx="7.100" ry="1.900" fill="#b7dcf0" stroke="#3b7fb2" stroke-width=".8"/><ellipse cx="8.300" cy="2.900" rx="5.600" ry="1.100" fill="#5a94bd"/><path d="M5.700,10.300 L8.300,6.600 L10.900,10.300 L9.500,10.300 L10.300,13.300 L6.300,13.300 L7.100,10.300 Z" fill="#48b02c" stroke="#2a8a18" stroke-width=".5"/></svg>
<svg class="a" style="left:1030.8px;top:217.9px" width="17" height="17" viewBox="0 0 17 17"><defs><linearGradient id="g32" x1="0" y1="0" x2="0" y2="1"><stop offset="0" stop-color="#ffffff"/><stop offset="1" stop-color="#dce8f6"/></linearGradient></defs><path d="M1.500,0.800 H9.600 L13.300,4.500 V16 H1.500 Z" fill="url(#g32)" stroke="#2f67a8" stroke-width="1"/><path d="M9.600,0.800 V4.500 H13.300" fill="#e9f1fb" stroke="#2f67a8" stroke-width=".8"/><path d="M6.200,7.600 L8,6.400 L15.600,13.800 L13.800,15.700 Z" fill="#f5962c" stroke="#c5640c" stroke-width=".6"/><path d="M5,5.400 L8,6.400 L6.200,7.600 Z" fill="#2a2a2a"/><path d="M13.800,15.700 L15.600,13.800 L16.400,14.800 L14.800,16.500 Z" fill="#d94a3a"/></svg>
<div class="a btn" style="left:855.5px;top:445px;width:78.2px;height:17.6px;"></div>
<div class="a btn" style="left:940.5px;top:445px;width:84.5px;height:17.6px;"></div>
<div class="a btn" style="left:1032px;top:445px;width:79px;height:17.6px;"></div>
<svg class="a" style="left:864.6px;top:448.6px" width="17" height="15" viewBox="0 0 17 15"><path d="M6.500,0.500 H10.800 V5.500 H6.500 Z" fill="#8fb6e6" stroke="#6f9ad6" stroke-width=".6"/><path d="M3,5 H14.200 L15.600,8.400 V10.400 H1.600 V8.400 Z" fill="#2b2b2b"/><path d="M3.600,5.300 H13.600 L14.400,7.400 H2.800 Z" fill="#555"/><path d="M0.600,10 H16.600 L15.400,12.800 H1.800 Z" fill="#a9caf2"/><rect x="4.200" y="10.400" width="8.800" height="3.600" fill="#7fb0ea"/><path d="M0.600,10 H2.800 V11.800 H1.400 Z M16.600,10 H14.400 V11.800 H15.800 Z" fill="#d6e6fa"/></svg>
<svg class="a" style="left:949.4px;top:447.3px" width="17" height="17" viewBox="0 0 17 17"><defs><radialGradient id="g33" cx=".38" cy=".28" r=".85"><stop offset="0" stop-color="#8fdc4a"/><stop offset=".55" stop-color="#3f9e14"/><stop offset="1" stop-color="#236f06"/></radialGradient></defs><circle cx="8.400" cy="8.400" r="7.700" fill="url(#g33)"/><path d="M4.400,8.600 L7.200,12.400 L12.400,3.600" fill="none" stroke="#fff" stroke-width="2.300" stroke-linecap="round" stroke-linejoin="round"/></svg>
<svg class="a" style="left:1041.4px;top:447.3px" width="17" height="17" viewBox="0 0 17 17"><defs><radialGradient id="g34" cx=".38" cy=".28" r=".85"><stop offset="0" stop-color="#ff7a6a"/><stop offset=".55" stop-color="#ea2a24"/><stop offset="1" stop-color="#c01010"/></radialGradient></defs><circle cx="8.400" cy="8.400" r="7.700" fill="url(#g34)"/><path d="M5.200,5.200 L11.600,11.600 M11.600,5.200 L5.200,11.600" stroke="#fff" stroke-width="2.700" stroke-linecap="round"/></svg>
<div class="a" style="left:20px;top:477px;width:5px;height:20px;border:1px solid #b9c3d6;border-right-color:#7f8aa3;border-bottom-color:#7f8aa3;background:linear-gradient(90deg,#fff,#d5deee);"></div>
<svg class="a" style="left:21.5px;top:483px" width="5" height="9" viewBox="0 0 5 9"><path d="M0.300,0.500 L4.600,4.500 L0.300,8.500 Z" fill="#000"/></svg>
<div class="a" style="left:542px;top:174px;width:28px;height:27px;border-radius:8px;background:#0d7df2;box-shadow:1px 2px 4px rgba(0,0,0,.6);"></div>
<div class="a" style="left:556px;top:201px;width:1.3px;height:15.5px;background:#1a7de8;"></div>
<span class="t" id="tt1" style="left:24.51px;top:9px;font-size:11.3px;line-height:12px;color:#fff;font-weight:bold;letter-spacing:0.458px;text-shadow:0 1px 1px rgba(0,0,0,.55);">Planejamento</span>
<span class="t" id="tt2" style="left:138.51px;top:9px;font-size:11.3px;line-height:12px;color:#fff;font-weight:bold;letter-spacing:0.246px;text-shadow:0 1px 1px rgba(0,0,0,.55);">Execução</span>
<span class="t" id="tt3" style="left:229.01px;top:9px;font-size:11.3px;line-height:12px;color:#0b1c3c;font-weight:bold;letter-spacing:0.184px;">Projetos</span>
<span class="t" id="tt4" style="left:312.51px;top:9px;font-size:11.3px;line-height:12px;color:#fff;font-weight:bold;letter-spacing:0.123px;text-shadow:0 1px 1px rgba(0,0,0,.55);">Apoio</span>
<span class="t" id="tt5" style="left:380.51px;top:9px;font-size:11.3px;line-height:12px;color:#fff;font-weight:bold;letter-spacing:0.167px;text-shadow:0 1px 1px rgba(0,0,0,.55);">Administração</span>
<span class="t" id="tt6" style="left:497.51px;top:9px;font-size:11.3px;line-height:12px;color:#fff;font-weight:bold;letter-spacing:0.304px;text-shadow:0 1px 1px rgba(0,0,0,.55);">Relatórios</span>
<span class="t" id="wel" style="left:779.42px;top:4px;font-size:13px;line-height:15px;color:#fff;letter-spacing:-0.016px;">Seja bem vindo(a), Administrador do Sistema</span>
<span class="t" id="exe" style="left:1059.42px;top:4px;font-size:13px;line-height:15px;color:#fff;font-style:italic;letter-spacing:-0.141px;">Exercício 2014</span>
<span class="t" id="st1" style="left:33.51px;top:35px;font-size:11.3px;line-height:12px;color:#0b1c3c;font-weight:bold;letter-spacing:0.244px;">Iniciação e Planejamento</span>
<span class="t" id="st2" style="left:210.51px;top:35px;font-size:11.3px;line-height:12px;color:#fff;font-weight:bold;letter-spacing:0.345px;text-shadow:0 1px 1px rgba(0,0,0,.55);">Execução Projeto</span>
<span class="t" id="st3" style="left:345.51px;top:35px;font-size:11.3px;line-height:12px;color:#fff;font-weight:bold;letter-spacing:0.450px;text-shadow:0 1px 1px rgba(0,0,0,.55);">Monitoramento</span>
<span class="t" id="st4" style="left:468.51px;top:35px;font-size:11.3px;line-height:12px;color:#fff;font-weight:bold;letter-spacing:0.108px;text-shadow:0 1px 1px rgba(0,0,0,.55);">Finalização</span>
<span class="t" id="st5" style="left:566.51px;top:35px;font-size:11.3px;line-height:12px;color:#fff;font-weight:bold;letter-spacing:0.416px;text-shadow:0 1px 1px rgba(0,0,0,.55);">Relatórios</span>
<span class="t" id="msg" style="left:1011.48px;top:30px;font-size:11.5px;line-height:12px;color:#223f80;font-style:italic;letter-spacing:-0.366px;">652 mensagens não lidas</span>
<span class="t" id="ttl" style="left:35.08px;top:66px;font-size:15.9px;line-height:17px;color:#1d4e8a;font-weight:bold;letter-spacing:-0.332px;">Modelo de Produção</span>
<span class="t" id="bc1" style="left:708.01px;top:65px;font-size:11.4px;line-height:12px;color:#1f3c70;letter-spacing:-0.166px;">Projetos &gt; Iniciação e Planejamento &gt; Modelo de Produção &gt;</span>
<span class="t" id="bc2" style="left:1011.51px;top:65px;font-size:11.4px;line-height:12px;color:#1c1c1c;letter-spacing:-0.420px;">Modelo de Produção</span>
<span class="t" id="dg" style="left:41.24px;top:93px;font-size:12.5px;line-height:14px;color:#1b4a80;font-weight:bold;letter-spacing:-0.115px;">Dados Gerais</span>
<span class="t" id="lnome" style="left:62.51px;top:119px;font-size:11.4px;line-height:12px;color:#5c4a26;letter-spacing:-0.300px;transform:scaleX(0.9661);transform-origin:0 0;">Nome</span>
<span class="t" id="vnome" style="left:99.01px;top:119px;font-size:11.1px;line-height:12px;color:#222;letter-spacing:-0.300px;transform:scaleX(0.9592);transform-origin:0 0;">FINANCIAMENTO BID</span>
<span class="t" id="lativo" style="left:632.51px;top:120px;font-size:11.4px;line-height:12px;color:#5c4a26;letter-spacing:0.040px;">Ativo</span>
<span class="t" id="ldesc" style="left:44.01px;top:147px;font-size:11.4px;line-height:12px;color:#5c4a26;letter-spacing:-0.300px;transform:scaleX(0.9741);transform-origin:0 0;">Descrição</span>
<span class="t" id="vdesc" style="left:99.01px;top:141px;font-size:11.4px;line-height:12px;color:#222;letter-spacing:-0.171px;">Modelo de produção para projetos de financiamento externo.</span>
<span class="t" id="ptab" style="left:53.01px;top:194px;font-size:11.3px;line-height:12px;color:#0b1c3c;font-weight:bold;letter-spacing:0.054px;">Produção</span>
<span class="t" id="tb1" style="left:317.51px;top:219px;font-size:11.4px;line-height:12px;color:#1f3c70;letter-spacing:-0.276px;">Subir</span>
<span class="t" id="tb2" style="left:375.51px;top:219px;font-size:11.4px;line-height:12px;color:#1f3c70;letter-spacing:-0.300px;transform:scaleX(0.9536);transform-origin:0 0;">Descer</span>
<span class="t" id="tb3" style="left:442.01px;top:219px;font-size:11.4px;line-height:12px;color:#1f3c70;letter-spacing:-0.403px;">Produto</span>
<span class="t" id="tb4" style="left:512.51px;top:219px;font-size:11.4px;line-height:12px;color:#1f3c70;letter-spacing:-0.085px;">Material/serviço</span>
<span class="t" id="tb5" style="left:624.01px;top:219px;font-size:11.4px;line-height:12px;color:#1f3c70;letter-spacing:-0.209px;">Vincular</span>
<span class="t" id="tb6" style="left:697.01px;top:219px;font-size:11.4px;line-height:12px;color:#1f3c70;letter-spacing:-0.353px;">Desvincular</span>
<span class="t" id="tb7" style="left:785.51px;top:219px;font-size:11.4px;line-height:12px;color:#1f3c70;letter-spacing:-0.315px;">Copiar</span>
<span class="t" id="tb8" style="left:850.51px;top:219px;font-size:11.4px;line-height:12px;color:#1f3c70;letter-spacing:-0.171px;">Recortar</span>
<span class="t" id="tb9" style="left:925.51px;top:219px;font-size:11.4px;line-height:12px;color:#1f3c70;letter-spacing:-0.311px;">Colar</span>
<span class="t" id="tb10" style="left:984.51px;top:219px;font-size:11.4px;line-height:12px;color:#1f3c70;letter-spacing:-0.366px;">Excluir</span>
<span class="t" id="tb11" style="left:1049.01px;top:219px;font-size:11.4px;line-height:12px;color:#1f3c70;letter-spacing:0.155px;">Alterar</span>
<span class="t" id="h1" style="left:44.51px;top:242px;font-size:11.4px;line-height:12px;color:#33302a;letter-spacing:-0.202px;">Título</span>
<span class="t" id="h2" style="left:425.51px;top:242px;font-size:11.4px;line-height:12px;color:#33302a;">C</span>
<span class="t" id="h3" style="left:462.51px;top:242px;font-size:11.4px;line-height:12px;color:#33302a;letter-spacing:-0.217px;">Gantt</span>
<span class="t" id="h4" style="left:495.01px;top:242px;font-size:11.4px;line-height:12px;color:#33302a;letter-spacing:-0.300px;transform:scaleX(0.9692);transform-origin:0 0;">Duração</span>
<span class="t" id="h5" style="left:540.51px;top:242px;font-size:11.4px;line-height:12px;color:#33302a;letter-spacing:-0.363px;">Unidade de Medida</span>
<span class="t" id="h6" style="left:653.51px;top:242px;font-size:11.4px;line-height:12px;color:#33302a;letter-spacing:-0.300px;transform:scaleX(0.9692);transform-origin:0 0;">Calc.</span>
<span class="t" id="h7" style="left:690.51px;top:242px;font-size:11.4px;line-height:12px;color:#33302a;letter-spacing:-0.299px;">Fórmula</span>
<span class="t" id="h8" style="left:895.51px;top:242px;font-size:11.4px;line-height:12px;color:#33302a;letter-spacing:0.005px;">Tolerância Inf.</span>
<span class="t" id="h9" style="left:1000.51px;top:242px;font-size:11.4px;line-height:12px;color:#33302a;letter-spacing:-0.252px;">Tolerância Sup.</span>
<span class="t" id="b1" style="left:884.01px;top:451px;font-size:11.4px;line-height:12px;color:#14284e;letter-spacing:0.124px;">Imprimir</span>
<span class="t" id="b2" style="left:968.51px;top:451px;font-size:11.4px;line-height:12px;color:#14284e;letter-spacing:-0.066px;">Confirmar</span>
<span class="t" id="b3" style="left:1060.51px;top:451px;font-size:11.4px;line-height:12px;color:#14284e;letter-spacing:-0.372px;">Cancelar</span>
<span class="t" id="bub" style="left:553.42px;top:181px;font-size:13px;line-height:15px;color:#fff;font-weight:bold;">1</span>
<span class="t" id="rn0" style="left:77.11px;top:261px;font-size:11.4px;line-height:12px;color:#222;">1</span>
<span class="t" id="ru0" style="left:544.51px;top:261px;font-size:11.1px;line-height:12px;color:#222;letter-spacing:-0.300px;transform:scaleX(0.9554);transform-origin:0 0;">UNIDADE</span>
<span class="t" id="rf0" style="left:694.51px;top:261px;font-size:11.4px;line-height:12px;color:#222;letter-spacing:0.438px;">[filhos]</span>
<span class="t" id="rn1" style="left:94.01px;top:282px;font-size:11.4px;line-height:12px;color:#222;letter-spacing:-0.677px;">1.1</span>
<span class="t" id="ru1" style="left:544.51px;top:282px;font-size:11.1px;line-height:12px;color:#222;letter-spacing:-0.300px;transform:scaleX(0.9554);transform-origin:0 0;">UNIDADE</span>
<span class="t" id="rf1" style="left:694.51px;top:282px;font-size:11.4px;line-height:12px;color:#222;letter-spacing:0.438px;">[filhos]</span>
<span class="t" id="rn2" style="left:109.51px;top:303px;font-size:11.4px;line-height:12px;color:#222;letter-spacing:-0.300px;transform:scaleX(0.9729);transform-origin:0 0;">1.1.1</span>
<span class="t" id="ru2" style="left:544.51px;top:303px;font-size:11.1px;line-height:12px;color:#222;letter-spacing:-0.300px;transform:scaleX(0.9554);transform-origin:0 0;">UNIDADE</span>
<span class="t" id="rf2" style="left:694.51px;top:303px;font-size:11.4px;line-height:12px;color:#222;letter-spacing:0.438px;">[filhos]</span>
<span class="t" id="rn3" style="left:125.51px;top:324px;font-size:11.4px;line-height:12px;color:#222;letter-spacing:-0.300px;transform:scaleX(0.9681);transform-origin:0 0;">1.1.1.1</span>
<span class="t" id="ru3" style="left:544.51px;top:324px;font-size:11.1px;line-height:12px;color:#222;letter-spacing:-0.300px;transform:scaleX(0.9554);transform-origin:0 0;">UNIDADE</span>
<span class="t" id="rf3" style="left:694.51px;top:324px;font-size:11.4px;line-height:12px;color:#222;letter-spacing:0.438px;">[filhos]</span>
<span class="t" id="rn4" style="left:141.51px;top:345px;font-size:11.4px;line-height:12px;color:#222;letter-spacing:-0.419px;">1.1.1.1.1</span>
<span class="t" id="rc4" style="left:426.01px;top:345px;font-size:11.4px;line-height:12px;color:#222;letter-spacing:0.073px;">0.0</span>
<span class="t" id="ru4" style="left:541.01px;top:345px;font-size:11.1px;line-height:12px;color:#222;letter-spacing:-0.300px;transform:scaleX(0.9554);transform-origin:0 0;">UNIDADE</span>
<span class="t" id="rn5" style="left:141.51px;top:366px;font-size:11.4px;line-height:12px;color:#222;letter-spacing:-0.419px;">1.1.1.1.2</span>
<span class="t" id="rc5" style="left:426.01px;top:366px;font-size:11.4px;line-height:12px;color:#222;letter-spacing:0.073px;">0.0</span>
<span class="t" id="ru5" style="left:541.01px;top:366px;font-size:11.1px;line-height:12px;color:#222;letter-spacing:-0.300px;transform:scaleX(0.9554);transform-origin:0 0;">UNIDADE</span>
<span class="t" id="rn6" style="left:141.51px;top:387px;font-size:11.4px;line-height:12px;color:#222;letter-spacing:-0.419px;">1.1.1.1.3</span>
<span class="t" id="rc6" style="left:426.01px;top:387px;font-size:11.4px;line-height:12px;color:#222;letter-spacing:0.073px;">0.0</span>
<span class="t" id="ru6" style="left:541.01px;top:387px;font-size:11.1px;line-height:12px;color:#222;letter-spacing:-0.300px;transform:scaleX(0.9554);transform-origin:0 0;">UNIDADE</span>
<span class="t" id="rn7" style="left:141.51px;top:408px;font-size:11.4px;line-height:12px;color:#222;letter-spacing:-0.419px;">1.1.1.1.4</span>
<span class="t" id="rc7" style="left:426.01px;top:408px;font-size:11.4px;line-height:12px;color:#222;letter-spacing:0.073px;">0.0</span>
<span class="t" id="ru7" style="left:541.01px;top:408px;font-size:11.1px;line-height:12px;color:#222;letter-spacing:-0.300px;transform:scaleX(0.9554);transform-origin:0 0;">UNIDADE</span>
</body></html>
